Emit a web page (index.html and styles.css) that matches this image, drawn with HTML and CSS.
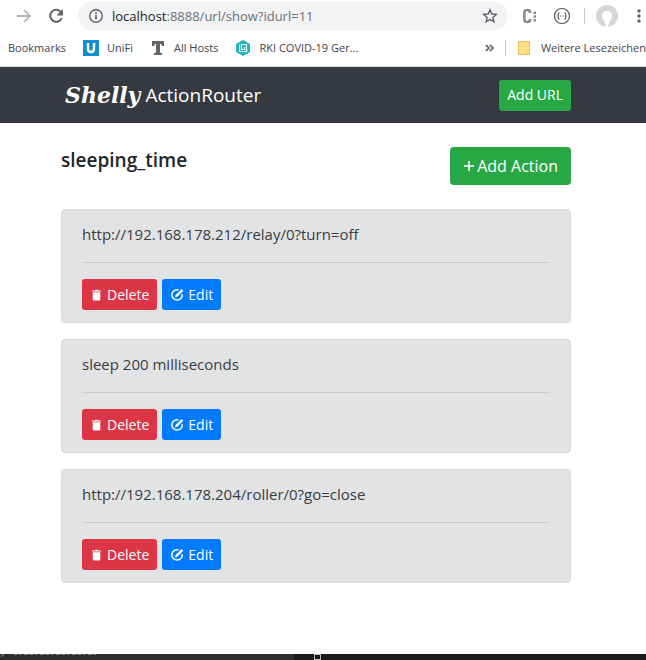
FILE: index.html
```html
<!DOCTYPE html>
<html lang="de">
<head>
<meta charset="utf-8">
<title>Shelly ActionRouter</title>
<meta name="viewport" content="width=device-width, initial-scale=1">
<link rel="stylesheet" href="styles.css">
</head>
<body>
<svg class="sprite" aria-hidden="true">
  <symbol id="trash" viewBox="0 0 12 12"><path fill="currentColor" d="M1.500 2.500V1.500h2.800L5 .8h2l.7.700h2.800v1zM2.200 3.200h7.600v7q0 1.300-1.300 1.300h-5q-1.300 0-1.300-1.300z"/></symbol>
  <symbol id="edit" viewBox="0 0 14 14"><path fill="none" stroke="currentColor" stroke-width="1.500" d="M8.500 1.900a5.200 5.200 0 1 0 3.700 4.200"/><path fill="currentColor" d="M5 9.400l.5-2.400L11.600 1l1.700 1.700-6 6z"/></symbol>
</svg>
<header class="browser">
  <div class="toolbar">
    <button class="tool" aria-label="Vorwärts"><svg width="16" height="16" viewBox="0 0 16 16"><path d="M1 8h13M8 2l6 6-6 6" fill="none" stroke="#b4b6b9" stroke-width="1.800"/></svg></button>
    <button class="tool" aria-label="Neu laden"><svg width="16" height="16" viewBox="0 0 16 16"><path d="M13.200 4.500A6 6 0 1 0 13.800 10" fill="none" stroke="#5f6368" stroke-width="2"/><path d="M15 1v6.500H8.500z" fill="#5f6368"/></svg></button>
    <div class="address">
      <svg width="16" height="16" viewBox="0 0 16 16"><circle cx="8" cy="8" r="6.300" fill="none" stroke="#5f6368" stroke-width="1.400"/><path d="M7.200 7h1.600v4.500H7.200zM7.200 4.300h1.600v1.600H7.200z" fill="#5f6368"/></svg>
      <div class="url"><span class="host">localhost</span>:8888/url/show?idurl=11</div>
      <button class="tool" aria-label="Lesezeichen"><svg width="16" height="16" viewBox="0 0 16 16"><path d="M8 1.800l1.800 4.200 4.500.4-3.400 3 1 4.400L8 11.500l-3.900 2.300 1-4.400-3.400-3 4.500-.4z" fill="none" stroke="#5f6368" stroke-width="1.400"/></svg></button>
    </div>
    <div class="extensions">
      <svg width="18" height="18" viewBox="0 0 18 18"><path d="M8 6V5Q8 3 5.200 3T2.400 5.500v7q0 2.500 2.800 2.500T8 13v-1" fill="none" stroke="#8b8b8b" stroke-width="2.600"/><path d="M11.500 4.500h2.500v2.500h-2.500zM11.500 8.200h2.500v2.500h-2.500zM11.500 12h2.500v2.500h-2.500z" fill="#8b8b8b"/></svg>
      <svg width="18" height="18" viewBox="0 0 18 18"><circle cx="9" cy="9" r="7.500" fill="none" stroke="#555" stroke-width="1.200"/><path d="M6.500 6Q5 6 5.300 7.500T4.200 9q1.400 0 1.100 1.500T6.500 12M11.500 6q1.500 0 1.200 1.500T13.800 9q-1.400 0-1.100 1.500T11.500 12M7.200 9h1.200M9.500 9h1.200" fill="none" stroke="#555" stroke-width="1.100"/></svg>
      <i class="divider"></i>
      <svg class="avatar" width="22" height="22" viewBox="0 0 22 22"><circle cx="11" cy="11" r="11" fill="#d6d6d6"/><path d="M8.500 18.500V16.500q-2.500-2-2.500-5.500 0-5 5-5t5 5q0 3.500-2.500 5.500v2z" fill="#fff"/><path d="M9.500 22v-4h3v4z" fill="#fff"/></svg>
      <svg width="4" height="16" viewBox="0 0 4 16"><g fill="#5f6368"><circle cx="2" cy="3" r="1.700"/><circle cx="2" cy="8" r="1.700"/><circle cx="2" cy="13" r="1.700"/></g></svg>
    </div>
  </div>
  <nav class="bookmarks">
    <a href="#">Bookmarks</a>
    <a href="#"><svg width="16" height="16" viewBox="0 0 16 16"><path fill="#0e8fd0" d="M0 0h16v16H0z"/><path d="M5 3v5.500q0 3.500 3 3.500t3-3.500V3" fill="none" stroke="#fff" stroke-width="2.400"/></svg>UniFi</a>
    <a href="#"><svg width="16" height="16" viewBox="0 0 16 16"><path fill="#666" d="M2 1h12v5h-2l-1-2h-1v8.500l2 .5v2H4v-2l2-.5V4H5L4 6H2z"/></svg>All Hosts</a>
    <a href="#"><svg width="16" height="16" viewBox="0 0 16 16"><path fill="#20b5bd" d="M8 0l7 4v8l-7 4-7-4V4z"/><path d="M4.500 4.500v7h7v-7h-5v5h3V7" fill="none" stroke="#e7ffff" stroke-width="1.200"/></svg>RKI COVID-19 Ger...</a>
    <button class="tool more" aria-label="Weitere"><svg width="10" height="8" viewBox="0 0 10 8"><path d="M1 1l3 3-3 3M5 1l3 3-3 3" fill="none" stroke="#555" stroke-width="1.600"/></svg></button>
    <i class="divider"></i>
    <a href="#" class="others"><svg width="12" height="14" viewBox="0 0 12 14"><path d="M.5.5h11v13H.5z" fill="#ffe08a" stroke="#e9c258"/><path d="M9 11v2.500h2.500" fill="none" stroke="#e9c258"/></svg>Weitere Lesezeichen</a>
  </nav>
</header>
<div class="navbar">
  <div class="container bar">
    <a class="brand" href="#"><span class="logo">Shelly</span>ActionRouter</a>
    <button class="btn green small">Add URL</button>
  </div>
</div>
<main class="container">
  <div class="heading">
    <h1>sleeping_time</h1>
    <button class="btn green large"><svg width="12" height="12" viewBox="0 0 12 12"><path d="M6 1v10M1 6h10" stroke="currentColor" stroke-width="1.600"/></svg>Add Action</button>
  </div>
  <section class="card">
    <p>http://192.168.178.212/relay/0?turn=off</p>
    <hr>
    <div class="actions"><button class="btn red small"><svg width="13" height="12"><use href="#trash"/></svg>Delete</button><button class="btn blue small"><svg width="14" height="14"><use href="#edit"/></svg>Edit</button></div>
  </section>
  <section class="card">
    <p>sleep 200 milliseconds</p>
    <hr>
    <div class="actions"><button class="btn red small"><svg width="13" height="12"><use href="#trash"/></svg>Delete</button><button class="btn blue small"><svg width="14" height="14"><use href="#edit"/></svg>Edit</button></div>
  </section>
  <section class="card">
    <p>http://192.168.178.204/roller/0?go=close</p>
    <hr>
    <div class="actions"><button class="btn red small"><svg width="13" height="12"><use href="#trash"/></svg>Delete</button><button class="btn blue small"><svg width="14" height="14"><use href="#edit"/></svg>Edit</button></div>
  </section>
</main>
<footer class="desktop">
  <div class="left"><svg width="96" height="3" viewBox="0 0 96 3"><path d="M1 2.500L4 0" stroke="#aaa" fill="none"/><path d="M14 .5h82" stroke="#888" stroke-dasharray="3 2 2 3 4 2" fill="none"/></svg></div>
  <div class="right"><i class="handle"></i></div>
</footer>
</body>
</html>
```

FILE: styles.css
```css
* { box-sizing: border-box; }
body {
  margin: 0;
  min-height: 100vh;
  display: flex;
  flex-direction: column;
  overflow-x: hidden;
  background: #fff;
  color: #212529;
  font: 15px/24px "Open Sans", "Noto Sans", sans-serif;
}
button { font: inherit; border: 0; cursor: pointer; }
a { color: inherit; text-decoration: none; }
svg { flex: none; display: block; }
.sprite { position: absolute; width: 0; height: 0; }

.browser { border-bottom: 1px solid #d5dfe0; overflow: hidden; padding-bottom: 2px; }
.toolbar { display: flex; align-items: center; height: 32px; padding-left: 16px; }
.tool { display: flex; padding: 0; background: none; flex: none; }
.toolbar > .tool { margin-right: 16px; }
.toolbar > .tool + .tool { margin-right: 14px; }
.address {
  display: flex;
  align-items: center;
  flex: 1;
  height: 28px;
  padding: 0 10px;
  gap: 8px;
  border-radius: 14px;
  background: #f1f3f4;
}
.url { flex: 1; font-size: 13px; color: #6b6f74; }
.host { color: #202124; }
.extensions { display: flex; align-items: center; gap: 13px; padding: 0 5px 0 14px; }
.extensions .avatar { margin: 0 6px 0 -2px; }
.divider { width: 1px; height: 16px; background: #c6c8ca; flex: none; }
.bookmarks {
  display: flex;
  align-items: center;
  height: 32px;
  padding-left: 8px;
  font-size: 11px;
  color: #3f4347;
  white-space: nowrap;
}
.bookmarks a { display: flex; align-items: center; gap: 8px; flex: none; margin-right: 17px; }
.bookmarks .more { margin: 0 10px 0 auto; }
.bookmarks .others { margin: 0 0 0 12px; gap: 11px; }

.navbar { padding-right: 14px; background: #343a40; color: #fff; }
.container { width: 100%; max-width: 540px; padding: 0 15px; margin: 0 auto; }
main.container { max-width: 554px; padding-right: 29px; }
.bar { display: flex; align-items: center; justify-content: space-between; height: 56px; }
.brand { display: flex; align-items: center; gap: 5px; padding-left: 4px; font-size: 19px; line-height: 30px; }
.logo { font: italic bold 22px/30px "DejaVu Serif", serif; }
.btn { display: flex; align-items: center; justify-content: center; color: #fff; border-radius: 4px; white-space: nowrap; }
.small { height: 31px; padding: 0 8px; gap: 4px; font-size: 14px; border-radius: 3px; }
.large { height: 38px; padding: 0 13px; gap: 2px; font-size: 16px; }
.green { background: #28a745; }
.red { background: #dc3545; }
.blue { background: #007bff; }
.heading { display: flex; justify-content: space-between; padding: 24px 0; }
h1 { margin: 0; font-size: 19px; line-height: 26px; font-weight: 600; }
.card {
  padding: 12px 20px;
  margin-bottom: 16px;
  border: 1px solid #d6d8db;
  border-radius: 4px;
  background: #e2e3e5;
  color: #383d41;
}
.card p { margin: 0; }
.card hr { margin: 16px 0; border: 0; border-top: 1px solid #c8cbcf; }
.actions { display: flex; gap: 5px; }

.desktop { display: flex; height: 6px; margin-top: auto; overflow: hidden; }
.left { width: 294px; background: #2e2e2e; }
.right { flex: 1; padding-left: 20px; background: #191919; }
.handle { display: block; width: 7px; height: 6px; border: 1px solid #bbb; }
```
